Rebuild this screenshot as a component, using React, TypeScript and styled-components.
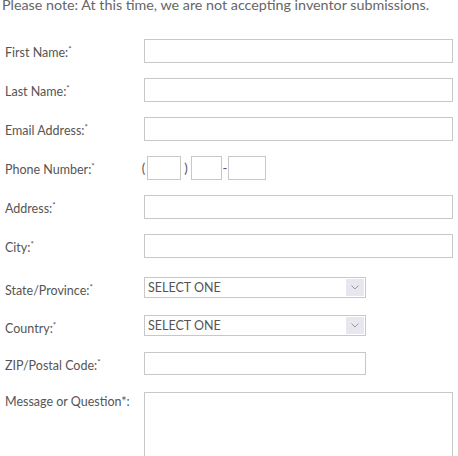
import React from "react";
import styled, { createGlobalStyle } from "styled-components";

const GlobalStyle = createGlobalStyle`
    body {
        margin: 0;
        background: #fff;
        font-family: Lato, "Open Sans", "DejaVu Sans", sans-serif;
        color: #555;
    }
`;

const Page = styled.div`
    width: 458px;
    height: 456px;
    overflow: hidden;
    padding-left: 2px;
`;

const Notice = styled.p`
    margin: -5px 0 0 0;
    font-size: 14.3px;
    line-height: 20px;
    color: #666;
`;

const Form = styled.form`
    display: flex;
    flex-direction: column;
    gap: 15px;
    margin-top: 24px;
    padding-left: 3px;
`;

const Row = styled.div<{ $shift?: number }>`
    display: grid;
    grid-template-columns: 139px auto;
    align-items: start;
    margin-top: ${(p) => p.$shift ?? 0}px;
`;

const Label = styled.label`
    font-size: 12.5px;
    line-height: 16px;
    padding-top: 2px;
    color: #555;

    sup {
        font-size: 8px;
        vertical-align: 5px;
    }
`;

const TextInput = styled.input<{ $w?: number; $h?: number }>`
    box-sizing: border-box;
    width: ${(p) => p.$w ?? 309}px;
    height: ${(p) => p.$h ?? 24}px;
    border: 1px solid #c8c8c8;
    padding: 0 4px;
    margin: 0;
    background: #fff;
`;

const PhoneGroup = styled.div`
    display: flex;
    align-items: center;
    font-size: 13px;
    color: #555;
    margin-left: -4px;
`;

const Sep = styled.span<{ $gap: number }>`
    display: inline-block;
    width: ${(p) => p.$gap}px;
    text-align: center;
`;

const SelectBox = styled.div`
    box-sizing: border-box;
    width: 222px;
    height: 21px;
    border: 1px solid #c8c8c8;
    display: flex;
    align-items: center;
    justify-content: space-between;
    padding-left: 3px;
    font-size: 12.5px;
    color: #555;
`;

const Arrow = styled.span`
    width: 18px;
    height: 17px;
    margin-right: 1px;
    background: #e8e6ef;
    display: flex;
    align-items: center;
    justify-content: center;
`;

const TextArea = styled.textarea`
    box-sizing: border-box;
    width: 309px;
    height: 100px;
    border: 1px solid #c8c8c8;
    margin: 0;
    resize: none;
`;

function Req() {
    return <sup>*</sup>;
}

function Select() {
    return (
        <SelectBox>
            <span>SELECT ONE</span>
            <Arrow>
                <svg width="8" height="5" viewBox="0 0 8 5">
                    <path d="M0.5 0.5 L4 4 L7.5 0.5" fill="none" stroke="#999" strokeWidth="1" />
                </svg>
            </Arrow>
        </SelectBox>
    );
}

export default function App() {
    return (
        <Page>
            <GlobalStyle />
            <Notice>Please note: At this time, we are not accepting inventor submissions.</Notice>
            <Form>
                <Row>
                    <Label>First Name:<Req /></Label>
                    <TextInput />
                </Row>
                <Row>
                    <Label>Last Name:<Req /></Label>
                    <TextInput />
                </Row>
                <Row>
                    <Label>Email Address:<Req /></Label>
                    <TextInput />
                </Row>
                <Row>
                    <Label>Phone Number:<Req /></Label>
                    <PhoneGroup>
                        <Sep $gap={7}>(</Sep>
                        <TextInput $w={34} />
                        <Sep $gap={10}>)</Sep>
                        <TextInput $w={31} />
                        <Sep $gap={6}>-</Sep>
                        <TextInput $w={38} />
                    </PhoneGroup>
                </Row>
                <Row>
                    <Label>Address:<Req /></Label>
                    <TextInput />
                </Row>
                <Row>
                    <Label>City:<Req /></Label>
                    <TextInput />
                </Row>
                <Row $shift={4}>
                    <Label>State/Province:<Req /></Label>
                    <Select />
                </Row>
                <Row $shift={1}>
                    <Label>Country:<Req /></Label>
                    <Select />
                </Row>
                <Row>
                    <Label>ZIP/Postal Code:<Req /></Label>
                    <TextInput $w={222} $h={23} />
                </Row>
                <Row $shift={2}>
                    <Label>Message or Question*:</Label>
                    <TextArea />
                </Row>
            </Form>
        </Page>
    );
}
